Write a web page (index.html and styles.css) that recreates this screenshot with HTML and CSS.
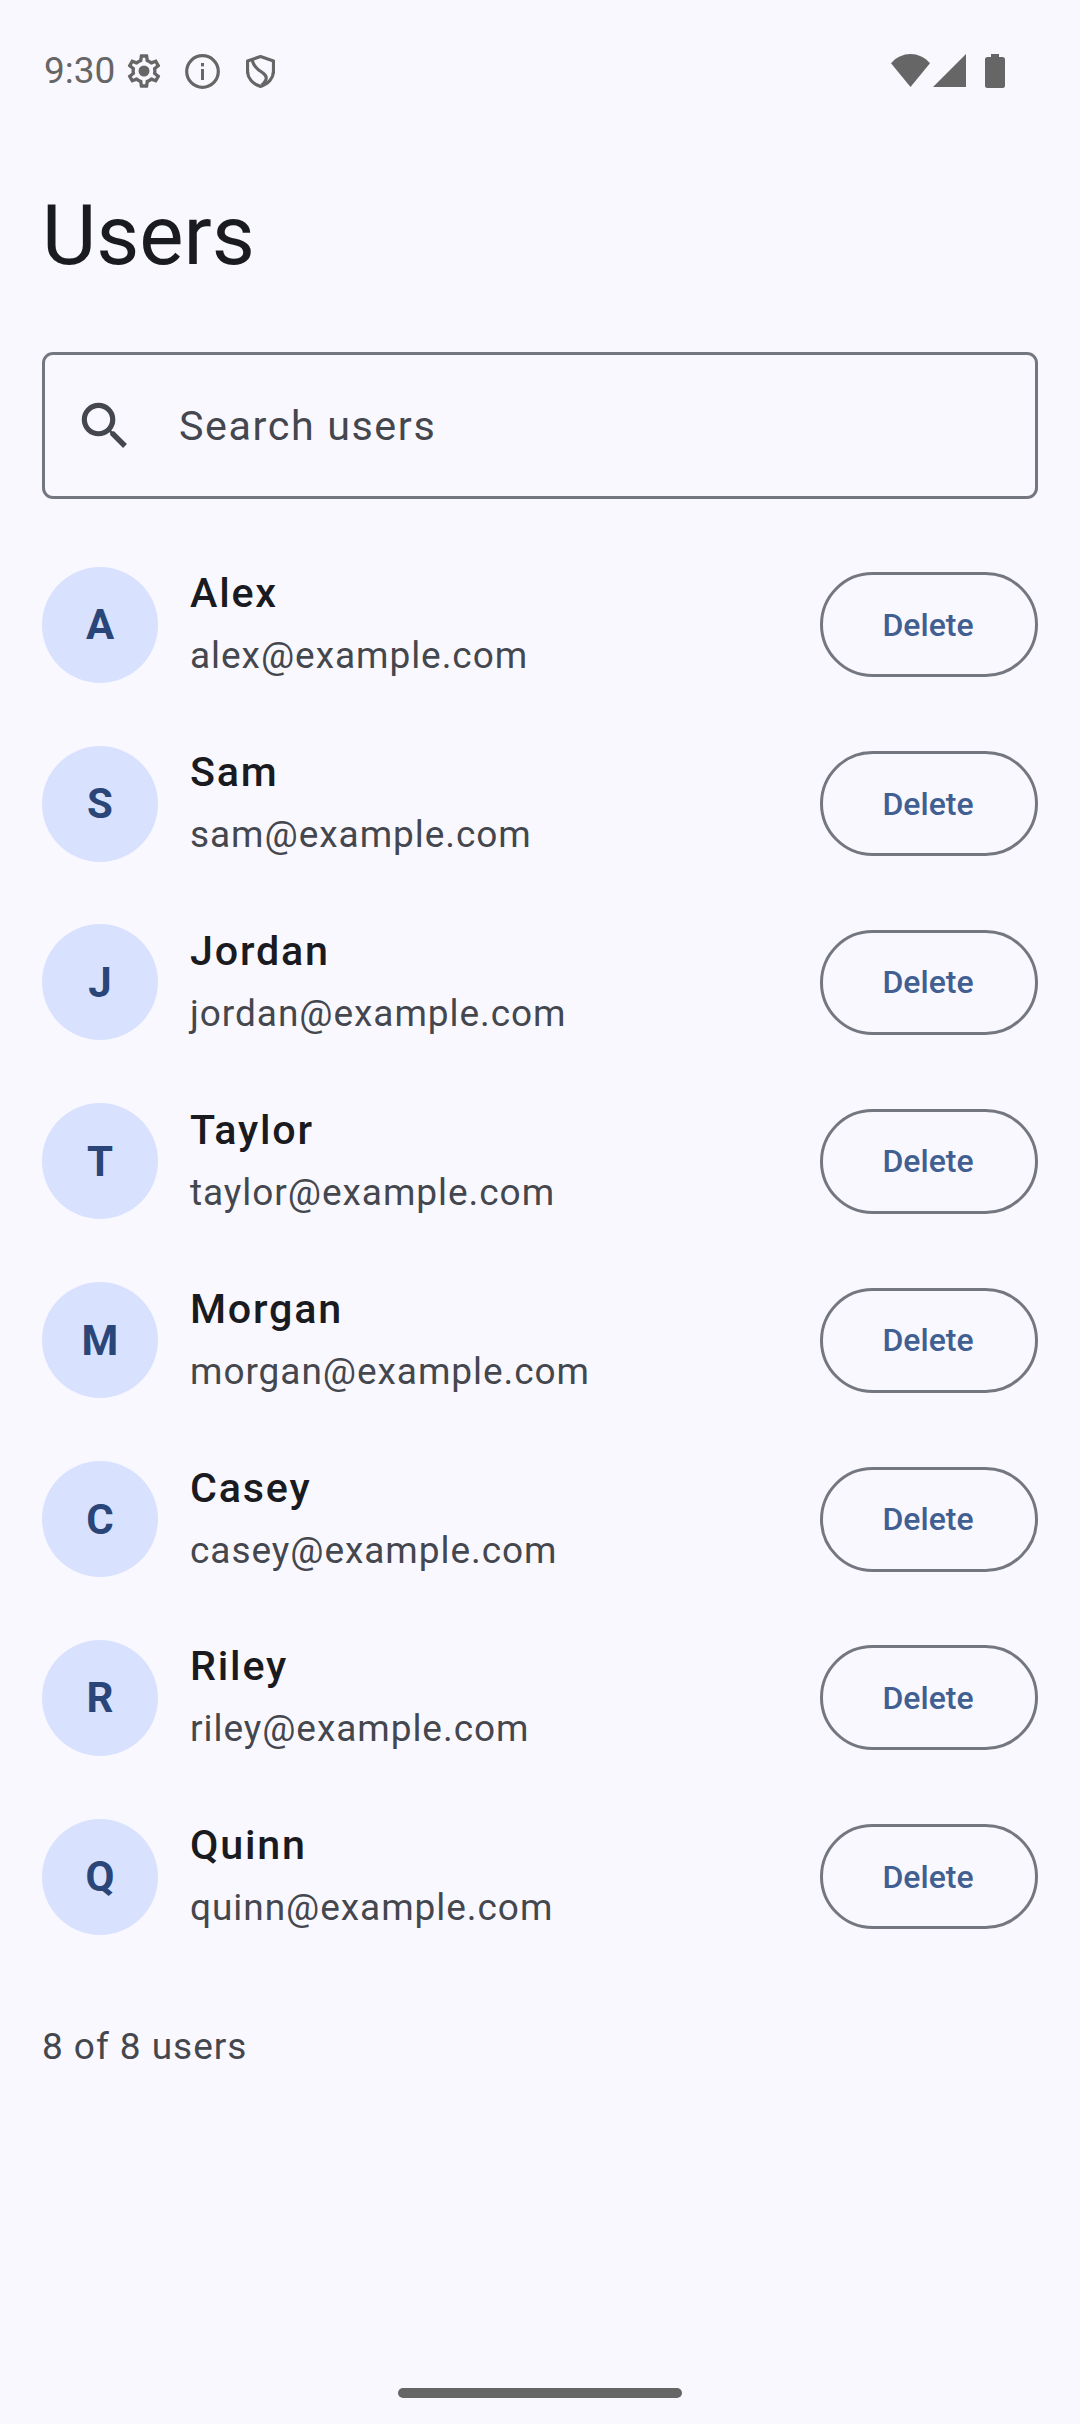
FILE: index.html
```html
<!DOCTYPE html>
<html lang="en">
<head>
<meta charset="utf-8">
<title>Users</title>
<link rel="stylesheet" href="styles.css">
</head>
<body>
<div class="screen">
  <header class="status">
    <div class="status-left">
      <span class="time">9:30</span>
      <svg class="ic-gear" viewBox="0 0 24 24"><path fill="#666" d="M19.430 12.980c.04-.32.07-.64.07-.98 0-.34-.03-.66-.07-.98l2.110-1.650c.19-.15.24-.42.12-.64l-2-3.460c-.09-.16-.26-.25-.44-.25-.06 0-.12.01-.17.03l-2.490 1c-.52-.4-1.080-.73-1.690-.98l-.38-2.650C14.460 2.180 14.250 2 14 2h-4c-.25 0-.46.18-.49.42l-.38 2.650c-.61.25-1.170.59-1.690.98l-2.490-1c-.06-.02-.12-.03-.18-.03-.17 0-.34.09-.43.25l-2 3.460c-.13.22-.07.49.12.64l2.110 1.650c-.04.32-.07.65-.07.98 0 .33.03.66.07.98l-2.110 1.650c-.19.15-.24.42-.12.64l2 3.460c.09.16.26.25.44.25.06 0 .12-.01.17-.03l2.490-1c.52.4 1.080.73 1.690.98l.38 2.650c.03.24.24.42.49.42h4c.25 0 .46-.18.49-.42l.38-2.650c.61-.25 1.170-.59 1.690-.98l2.490 1c.06.02.12.03.18.03.17 0 .34-.09.43-.25l2-3.460c.12-.22.07-.49-.12-.64l-2.110-1.650zm-1.980-1.710c.04.31.05.52.05.73 0 .21-.02.43-.05.73l-.14 1.130.89.7 1.080.84-.7 1.210-1.270-.51-1.040-.42-.9.68c-.43.32-.84.56-1.250.73l-1.060.43-.16 1.130-.2 1.350h-1.400l-.19-1.350-.16-1.130-1.060-.43c-.43-.18-.83-.41-1.230-.71l-.91-.7-1.060.43-1.270.51-.7-1.210 1.080-.84.89-.7-.14-1.130c-.03-.31-.05-.54-.05-.74s.02-.43.05-.73l.14-1.130-.89-.7-1.080-.84.7-1.210 1.270.51 1.040.42.9-.68c.43-.32.84-.56 1.250-.73l1.060-.43.16-1.130.2-1.350h1.390l.19 1.350.16 1.130 1.060.43c.43.18.83.41 1.230.71l.91.7 1.060-.43 1.270-.51.7 1.210-1.070.85-.89.7.14 1.130z"/><circle cx="12" cy="12" r="3.300" fill="#666"/></svg>
      <svg class="ic-info" viewBox="0 0 35 35"><circle cx="17.500" cy="17.500" r="15.800" fill="none" stroke="#666" stroke-width="3.200"/><rect x="16" y="15" width="3" height="11" fill="#666"/><rect x="16" y="9" width="3" height="3.400" fill="#666"/></svg>
      <svg class="ic-shield" viewBox="0 0 29 33"><path fill="none" stroke="#666" stroke-width="3.200" stroke-linejoin="round" d="M14.500 1.600 27.500 6v10c0 7.200-5.200 13.200-13 15.400C6.700 29.200 1.500 23.200 1.500 16V6z"/><path fill="none" stroke="#666" stroke-width="3.200" d="M6 4C7 11 12 15 17 18c4 3 5 6-1 12"/></svg>
    </div>
    <div class="status-right">
      <svg class="ic-wifi" viewBox="0 0 39 33"><path fill="#666" d="M0 9.200C5 3.400 12 0 19.500 0S34 3.400 39 9.200L19.500 33z"/></svg>
      <svg class="ic-signal" viewBox="0 0 33 33"><path fill="#666" d="M33 0v33H0z"/></svg>
      <svg class="ic-battery" viewBox="0 0 20 34"><path fill="#666" d="M6 0h8v3h3.500A2.500 2.500 0 0 1 20 5.500V31.500A2.500 2.500 0 0 1 17.500 34H2.500A2.500 2.500 0 0 1 0 31.500V5.500A2.500 2.500 0 0 1 2.500 3H6z"/></svg>
    </div>
  </header>

  <main class="content">
    <h1 class="title">Users</h1>
    <div class="search">
      <svg class="ic-search" viewBox="0 0 24 24"><path fill="#44474e" d="M15.500 14h-.79l-.28-.27A6.470 6.470 0 0 0 16 9.500 6.500 6.500 0 1 0 9.500 16c1.610 0 3.090-.59 4.230-1.570l.27.28v.79l5 4.990L20.490 19l-4.990-5zm-6 0C7.010 14 5 11.990 5 9.500S7.010 5 9.500 5 14 7.010 14 9.500 11.990 14 9.500 14z"/></svg>
      <span class="placeholder">Search users</span>
    </div>
    <ul class="list">
      <li class="row"><span class="avatar">A</span><div class="info"><span class="name">Alex</span><span class="email">alex@example.com</span></div><button class="delete">Delete</button></li>
      <li class="row"><span class="avatar">S</span><div class="info"><span class="name">Sam</span><span class="email">sam@example.com</span></div><button class="delete">Delete</button></li>
      <li class="row"><span class="avatar">J</span><div class="info"><span class="name">Jordan</span><span class="email">jordan@example.com</span></div><button class="delete">Delete</button></li>
      <li class="row"><span class="avatar">T</span><div class="info"><span class="name">Taylor</span><span class="email">taylor@example.com</span></div><button class="delete">Delete</button></li>
      <li class="row"><span class="avatar">M</span><div class="info"><span class="name">Morgan</span><span class="email">morgan@example.com</span></div><button class="delete">Delete</button></li>
      <li class="row"><span class="avatar">C</span><div class="info"><span class="name">Casey</span><span class="email">casey@example.com</span></div><button class="delete">Delete</button></li>
      <li class="row"><span class="avatar">R</span><div class="info"><span class="name">Riley</span><span class="email">riley@example.com</span></div><button class="delete">Delete</button></li>
      <li class="row"><span class="avatar">Q</span><div class="info"><span class="name">Quinn</span><span class="email">quinn@example.com</span></div><button class="delete">Delete</button></li>
    </ul>
    <p class="count">8 of 8 users</p>
  </main>

  <footer class="nav"><span class="handle"></span></footer>
</div>
</body>
</html>
```
FILE: styles.css
```css
* { box-sizing: border-box; }
html, body { margin: 0; padding: 0; }
body {
  width: 1080px;
  height: 2424px;
  overflow: hidden;
  background: #faf8ff;
  font-family: Roboto, sans-serif;
  color: #1a1b20;
}
.screen { height: 2424px; display: flex; flex-direction: column; }

.status {
  height: 141px;
  flex: none;
  padding: 54px 75px 0 44px;
  display: flex;
  justify-content: space-between;
  align-items: flex-start;
}
.status-left, .status-right { display: flex; align-items: flex-start; height: 34px; }
.time { font-size: 37px; line-height: 34px; color: #666; width: 79.500px; }
.ic-gear { width: 40px; height: 40px; margin: -3px 0 0 0; }
.ic-info { width: 35px; height: 35px; margin: 0 0 0 21px; }
.ic-shield { width: 29px; height: 33px; margin: 1px 0 0 26px; }
.ic-wifi { width: 39px; height: 33px; }
.ic-signal { width: 33px; height: 33px; margin-left: 3px; }
.ic-battery { width: 20px; height: 34px; margin-left: 19px; }

.content { flex: 1; padding: 0 42px; }
.title {
  margin: 0;
  padding-top: 40px;
  font-size: 83.500px;
  font-weight: 400;
  line-height: 110px;
  height: 211px;
}
.search {
  height: 147px;
  border: 3px solid #74777f;
  border-radius: 11px;
  display: flex;
  align-items: center;
  padding-left: 29px;
}
.ic-search { width: 62px; height: 62px; flex: none; }
.placeholder {
  margin-left: 43px;
  font-size: 41.250px;
  letter-spacing: 1.600px;
  color: #44474e;
}

.list { list-style: none; margin: 0; padding: 36.200px 0 0; }
.row {
  height: 178.900px;
  display: flex;
  align-items: center;
}
.avatar {
  width: 116px;
  height: 116px;
  flex: none;
  border-radius: 50%;
  background: #d8e2ff;
  color: #2a4678;
  font-size: 42px;
  font-weight: 700;
  display: flex;
  align-items: center;
  justify-content: center;
}
.info {
  flex: 1;
  margin-left: 32px;
  display: flex;
  flex-direction: column;
  gap: 11px;
}
.name { font-size: 41.250px; font-weight: 500; line-height: 52px; letter-spacing: 1.800px; }
.email { font-size: 37px; line-height: 52px; letter-spacing: 0.950px; color: #44474e; }
.delete {
  width: 218px;
  height: 105px;
  flex: none;
  border: 3px solid #74777f;
  border-radius: 52.500px;
  background: transparent;
  color: #415f91;
  font-family: Roboto, sans-serif;
  font-size: 32px;
  font-weight: 500;
  padding: 0 2px 0 0;
}
.count {
  margin: 54.500px 0 0;
  font-size: 37px;
  line-height: 52px;
  letter-spacing: 0.950px;
  color: #44474e;
}

.nav { flex: none; height: 70px; display: flex; justify-content: center; padding-top: 34px; }
.handle { width: 284px; height: 10px; border-radius: 5px; background: #666; }
```
